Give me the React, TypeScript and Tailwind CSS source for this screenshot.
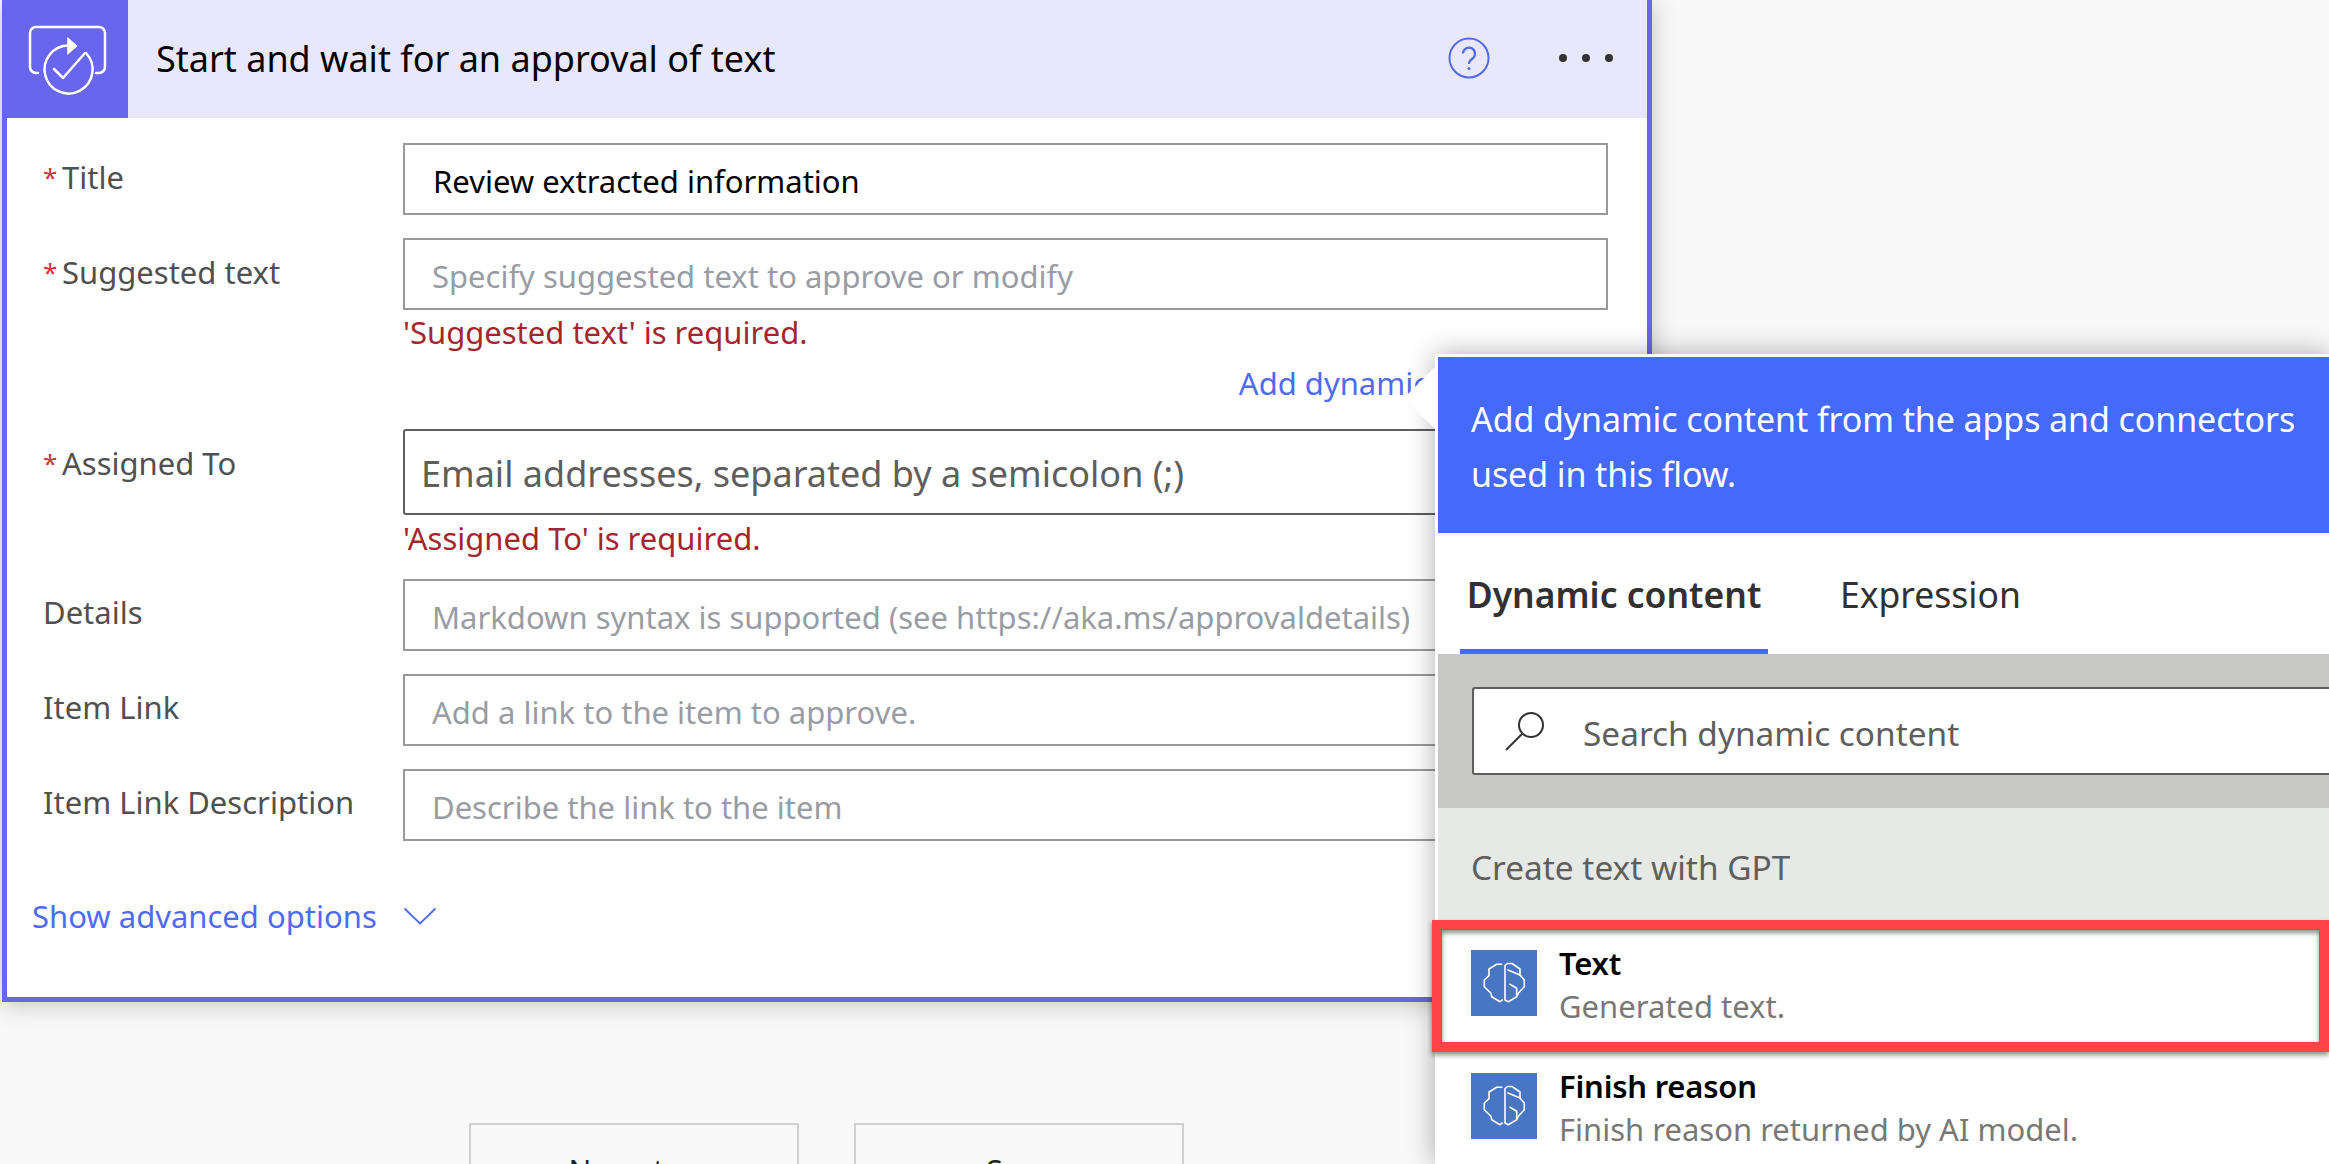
const F = "font-['Noto_Sans',sans-serif]";

function FlowIcon() {
  return (
    <svg width="126" height="118" viewBox="2 0 126 118" fill="none" stroke="white" strokeWidth="2.5" strokeLinecap="round" strokeLinejoin="round">
      <path d="M38 73H36a6 6 0 0 1-6-6V33a6 6 0 0 1 6-6h63a6 6 0 0 1 6 6v34a6 6 0 0 1-6 6h-3" />
      <path d="M69 45.5A24 24 0 1 0 86 53" />
      <path d="M68 38l9 8-9 8z" fill="white" stroke="white" strokeWidth="1" />
      <path d="M54 69l9 9 22-25" />
    </svg>
  );
}

function HelpIcon() {
  return (
    <svg className="-mt-[3px]" width="42" height="42" viewBox="0 0 42 42" fill="none" stroke="#4f6bed" strokeWidth="2">
      <circle cx="21" cy="21" r="19.5" />
      <path d="M15 16.5a6 6 0 1 1 9.5 5c-2.4 1.7-3.5 2.5-3.5 5.5" strokeWidth="2.2" />
      <circle cx="21" cy="31.5" r="1.5" fill="#4f6bed" stroke="none" />
    </svg>
  );
}

function BrainIcon() {
  return (
    <div className="w-[66px] h-[66px] bg-[#4876c4] shrink-0">
      <svg width="66" height="66" viewBox="0 0 66 66" fill="none" stroke="white" strokeWidth="1.6" strokeLinejoin="round" strokeLinecap="round">
        <path d="M30.7 14.3H25.7L18 19V25.7L13.3 30V36.7L20 43.3L20.7 46.7L29 51.7L31.3 50" />
        <path d="M36.5 13.5H41L49 19V25L53.3 30V36.7L47.3 43.3L45.7 46.7L37.3 51.7L34 50V15.5Z" />
        <path d="M37 20L49 25" />
        <path d="M39 34.3L45.7 38.3V45" />
      </svg>
    </div>
  );
}

function Field(props: { label: string; required?: boolean; placeholder?: string; value?: string; mb: string }) {
  return (
    <div className={`flex ${props.mb}`}>
      <div className={`w-[360px] pl-[36px] ${props.required ? "pt-[14px]" : "pt-[13px]"} h-[40px] box-content text-[31px] leading-[40px] text-[#505050] flex`}>
        {props.required && <span className="text-[#d13438] text-[26px] w-[19px] shrink-0">*</span>}
        <span>{props.label}</span>
      </div>
      <div className="w-[1205px] h-[72px] border-2 border-[#999999] bg-white flex items-center pl-[28px] pt-[5px] text-[31px] whitespace-nowrap overflow-hidden">
        {props.value ? <span className="text-black">{props.value}</span> : <span className="-ml-[1px] text-[#9a9ca3]">{props.placeholder}</span>}
      </div>
    </div>
  );
}

function Row(props: { title: string; sub: string }) {
  return (
    <div className="h-[123px] pt-[20px] pl-[33px] flex gap-[23px] bg-white">
      <BrainIcon />
      <div className="-mt-[8px] -ml-[1px]">
        <div className="text-[31px] leading-[43px] tracking-[-0.2px] font-semibold text-black">{props.title}</div>
        <div className="text-[31px] leading-[43px] text-[#7a7876]">{props.sub}</div>
      </div>
    </div>
  );
}

export default function App() {
  return (
    <div className={`relative w-[2329px] h-[1164px] overflow-hidden bg-[#f8f8f8] ${F}`}>
      <div className="ml-[2px] w-[1650px] h-[1002px] bg-white border-x-[5px] border-b-[5px] border-[#6865ee] shadow-[0_2px_24px_rgba(0,0,0,0.22)]">
        <div className="-ml-[5px] h-[118px] bg-[#e9e7fc] flex items-center">
          <div className="w-[126px] h-[118px] bg-[#6865ee] shrink-0">
            <FlowIcon />
          </div>
          <div className="ml-[28px] text-[36px] text-black flex-1">Start and wait for an approval of text</div>
          <HelpIcon />
          <div className="flex gap-[15px] ml-[69px] mr-[34px] -mt-[2px]">
            <span className="w-[8px] h-[8px] rounded-full bg-[#333]" />
            <span className="w-[8px] h-[8px] rounded-full bg-[#333]" />
            <span className="w-[8px] h-[8px] rounded-full bg-[#333]" />
          </div>
        </div>
        <div className="pt-[25px]">
          <Field label="Title" required value="Review extracted information" mb="mb-[23px]" />
          <Field label="Suggested text" required placeholder="Specify suggested text to approve or modify" mb="mb-0" />
          <div className="-mt-[1px] pl-[396px] text-[31px] leading-[46px] text-[#a4262c]">'Suggested text' is required.</div>
          <div className="w-[1541px] flex justify-end mt-[8px] mb-[26px] text-[31px] leading-[40px] text-[#4f6bf5]">Add dynamic content</div>
          <div className="flex">
            <div className="w-[360px] pl-[36px] pt-[14px] h-[40px] box-content text-[31px] leading-[40px] text-[#505050] flex">
              <span className="text-[#d13438] text-[26px] w-[19px] shrink-0">*</span>
              <span>Assigned To</span>
            </div>
            <div className="w-[1205px] h-[86px] border-2 border-[#605e5c] rounded-[3px] bg-white flex items-center pl-[16px] pt-[4px] text-[36px] text-[#605e5c] whitespace-nowrap">
              Email addresses, separated by a semicolon (;)
            </div>
          </div>
          <div className="pl-[396px] mb-[18px] text-[31px] leading-[46px] text-[#a4262c]">'Assigned To' is required.</div>
          <Field label="Details" placeholder="Markdown syntax is supported (see https://aka.ms/approvaldetails)" mb="mb-[23px]" />
          <Field label="Item Link" placeholder="Add a link to the item to approve." mb="mb-[23px]" />
          <Field label="Item Link Description" placeholder="Describe the link to the item" mb="mb-0" />
          <div className="mt-[55px] pl-[25px] flex items-center text-[31px] leading-[40px] text-[#4f6bf5]">
            <span>Show advanced options</span>
            <svg className="ml-[26px]" width="34" height="18" viewBox="0 0 34 18" fill="none" stroke="#4f6bed" strokeWidth="1.8">
              <path d="M1.5 1.5L17 16.5L32.5 1.5" />
            </svg>
          </div>
        </div>
      </div>

      <div className="mt-[121px] ml-[469px] flex gap-[55px]">
        <div className="w-[330px] h-[94px] border-2 border-[#d0d0d0] flex items-center justify-center text-[30px] text-[#222]">New step</div>
        <div className="w-[330px] h-[94px] border-2 border-[#d0d0d0] flex items-center justify-center text-[30px] text-[#222]">Save</div>
      </div>

      <div className="absolute left-[1435px] top-[354px] right-0 bottom-0 bg-white pl-[3px] pt-[3px] shadow-[0_0_26px_rgba(0,0,0,0.32)]">
        <div className="absolute -left-[31px] top-[13px] w-0 h-0 border-y-[31px] border-y-transparent border-r-[31px] border-r-white" />
        <div className="h-[176px] bg-[#4569fb] px-[33px] pt-[35px] text-[34px] leading-[55px] tracking-[-0.1px] text-white">
          <div>Add dynamic content from the apps and connectors</div>
          <div>used in this flow.</div>
        </div>
        <div className="h-[121px] bg-white flex pl-[22px] text-[35.5px]">
          <div className="w-[308px] h-[121px] pt-[8px] border-b-[5px] border-[#4569fb] flex items-center justify-center font-semibold text-[#323130]">Dynamic content</div>
          <div className="ml-[72px] h-[121px] pt-[3px] flex items-center text-[#323130]">Expression</div>
        </div>
        <div className="h-[154px] bg-[#c8c9c6] pl-[34px] pt-[33px]">
          <div className="h-[88px] border-2 border-r-0 border-[#605e5c] rounded-l-[3px] bg-white flex items-center">
            <svg className="ml-[30px]" width="44" height="44" viewBox="0 0 44 44" fill="none" stroke="#323130" strokeWidth="2">
              <circle cx="27" cy="16" r="12" />
              <path d="M18 25L2 41" />
            </svg>
            <span className="ml-[35px] pt-[4px] text-[33.4px] text-[#605e5c]">Search dynamic content</span>
          </div>
        </div>
        <div className="h-[122px] bg-[#e7e9e6] pl-[33px] pt-[34px] text-[33.4px] leading-[50px] text-[#605e5c]">Create text with GPT</div>
        <Row title="Text" sub="Generated text." />
        <Row title="Finish reason" sub="Finish reason returned by AI model." />
        <div className="absolute -left-[3px] top-[566px] w-[897px] h-[132px] border-[10px] border-[#ff4346] shadow-[0_3px_5px_rgba(0,0,0,0.45),inset_0_3px_5px_rgba(0,0,0,0.45)]" />
      </div>
    </div>
  );
}
